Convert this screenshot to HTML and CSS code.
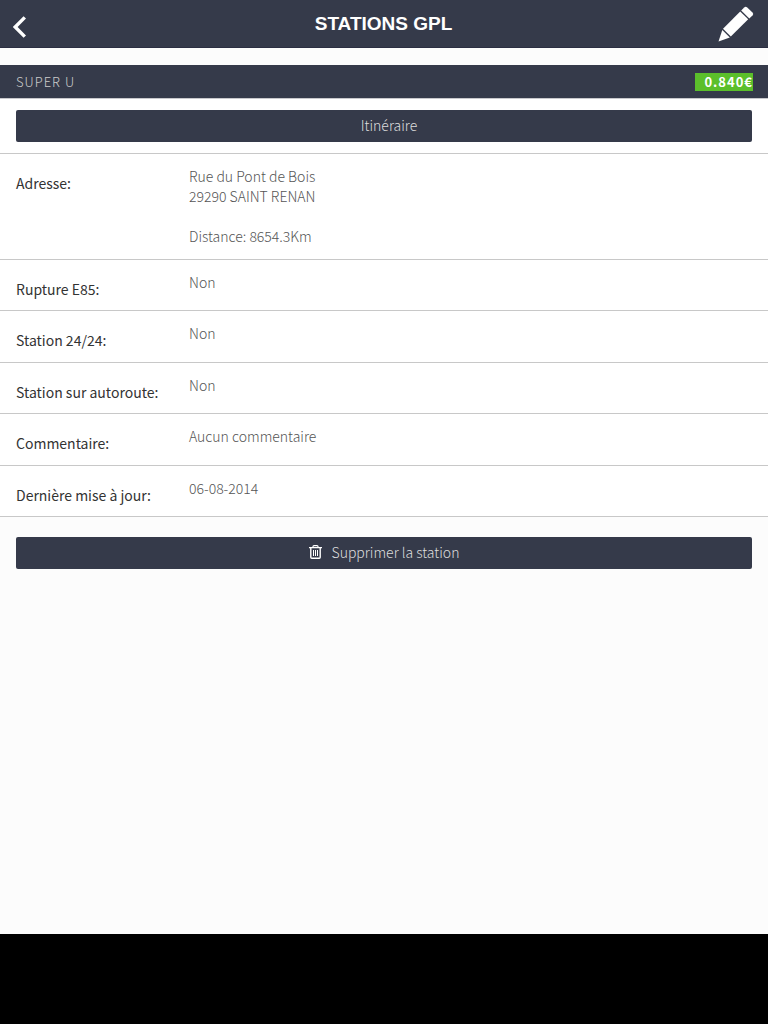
FILE: index.html
```html
<!DOCTYPE html>
<html lang="fr">
<head>
    <meta charset="UTF-8">
    <meta name="viewport" content="width=device-width, initial-scale=1.0">
    <title>Stations GPL</title>
    <link rel="stylesheet" href="styles.css">
</head>
<body>
    <header class="topbar">
        <a href="#" class="topbar-link" aria-label="Retour">
            <svg width="14" height="22" viewBox="0 0 14 22" fill="none" stroke="#fff" stroke-width="3.4">
                <path d="M11.8 1.4 L2.2 11 L11.8 20.6"/>
            </svg>
        </a>
        <h1>STATIONS GPL</h1>
        <a href="#" class="topbar-link" aria-label="Modifier">
            <svg width="36" height="36" viewBox="0 0 36 36" fill="#fff">
                <path d="M0.5 35.5 L4.3 24 L11.8 31.5 Z"/>
                <path d="M5 22.8 L22.2 5.6 L30.2 13.2 L12.8 30.6 Z"/>
                <path d="M23.2 4.6 L26.2 1.4 Q27.7 0 29.2 1.4 L34.5 6.6 Q36 8.2 34.5 9.6 L31.3 12.4 Z"/>
            </svg>
        </a>
    </header>

    <main class="content">
        <div class="station-header">
            <h2>SUPER U</h2>
            <span class="price">0.840€</span>
        </div>
        <div class="route">
            <button type="button" class="btn btn-route">Itinéraire</button>
        </div>
        <dl class="details">
            <div class="row">
                <dt>Adresse:</dt>
                <dd>Rue du Pont de Bois<br>29290 SAINT RENAN<br><br>Distance: 8654.3Km</dd>
            </div>
            <div class="row">
                <dt>Rupture E85:</dt>
                <dd>Non</dd>
            </div>
            <div class="row">
                <dt>Station 24/24:</dt>
                <dd>Non</dd>
            </div>
            <div class="row">
                <dt>Station sur autoroute:</dt>
                <dd>Non</dd>
            </div>
            <div class="row">
                <dt>Commentaire:</dt>
                <dd>Aucun commentaire</dd>
            </div>
            <div class="row">
                <dt>Dernière mise à jour:</dt>
                <dd>06-08-2014</dd>
            </div>
        </dl>
        <div class="actions">
            <button type="button" class="btn">
                <svg width="13" height="14" viewBox="0 0 13 14" fill="none" stroke="#fff">
                    <path d="M0 2.7 H13 M4 2.7 V1.5 Q4 0.6 5 0.6 H8 Q9 0.6 9 1.5 V2.7" stroke-width="1.2"/>
                    <path d="M1.8 3 V12.3 Q1.8 13.3 2.8 13.3 H10.2 Q11.2 13.3 11.2 12.3 V3" stroke-width="1.4"/>
                    <path d="M4.5 5 V11 M6.5 5 V11 M8.5 5 V11"/>
                </svg>
                Supprimer la station
            </button>
        </div>
    </main>

    <footer class="banner"></footer>
</body>
</html>
```

FILE: styles.css
```css
* {
    box-sizing: border-box;
}
body {
    display: flex;
    flex-direction: column;
    min-height: 100vh;
    margin: 0;
    background-color: #fcfcfc;
    color: #333;
    font-family: "Noto Sans CJK JP", "Noto Sans", sans-serif;
    font-size: 14px;
    font-weight: 300;
    line-height: 20px;
}
.topbar {
    display: flex;
    align-items: center;
    justify-content: space-between;
    height: 48px;
    padding: 0 14px 0 13px;
    background-color: #353a4a;
    border-bottom: 1px solid #2b2e42;
}
.topbar-link {
    display: flex;
    flex: 1;
    padding-top: 6px;
}
.topbar-link:last-child {
    justify-content: flex-end;
    padding-top: 0;
}
.topbar h1 {
    margin: 0;
    color: #fff;
    font-family: "Liberation Sans", Arial, sans-serif;
    font-size: 19px;
    font-weight: bold;
}
.content {
    flex: 1;
    padding-top: 17px;
}
.station-header {
    display: flex;
    align-items: center;
    justify-content: space-between;
    height: 34px;
    padding: 0 15px 0 16px;
    background-color: #353a4a;
    border-bottom: 1px solid #c8c8cc;
}
.station-header h2 {
    margin: 0;
    color: #ccc;
    font-size: 13px;
    font-weight: 300;
    letter-spacing: 1px;
}
.price {
    padding-left: 9px;
    background-color: #5bbf2b;
    color: #fff;
    font-size: 13px;
    font-weight: bold;
    letter-spacing: 1px;
    line-height: 18px;
}
.route {
    padding: 11px 16px;
    background-color: #fff;
    border-bottom: 1px solid #c8c8c8;
}
.btn {
    display: flex;
    align-items: center;
    justify-content: center;
    gap: 10px;
    width: 100%;
    height: 32px;
    padding: 0 0 2px;
    border: none;
    border-radius: 2px;
    background-color: #353a4a;
    color: #ddd;
    font: inherit;
    cursor: pointer;
}
.btn-route {
    padding-left: 10px;
}
.details {
    display: grid;
    grid-template-rows: auto repeat(5, 1fr);
    min-height: 363px;
    margin: 0;
    background-color: #fff;
}
.row {
    display: grid;
    grid-template-columns: 173px 1fr;
    padding: 12px 16px 11px;
    border-bottom: 1px solid #c8c8c8;
}
.row dt {
    padding-top: 7px;
    font-weight: 400;
}
.row dd {
    margin: 0;
    padding-bottom: 2px;
    color: #555;
}
.actions {
    padding: 20px 16px;
}
.banner {
    height: 90px;
    background-color: #000;
}
```
